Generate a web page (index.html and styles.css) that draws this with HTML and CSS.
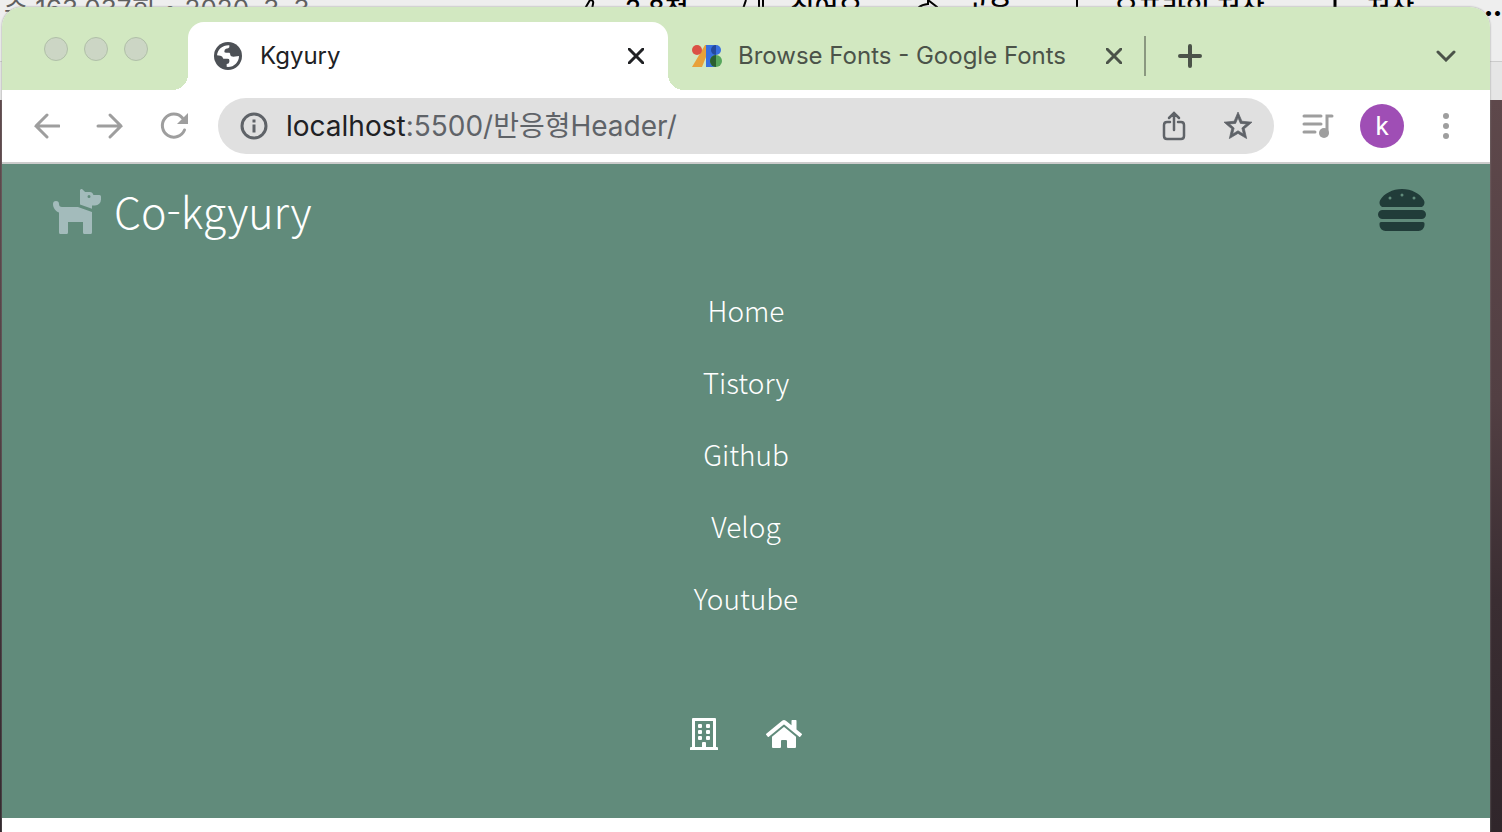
FILE: index.html
```
<!DOCTYPE html>
<html lang="ko">
<head>
  <meta charset="UTF-8">
  <meta name="viewport" content="width=device-width, initial-scale=1.0">
  <title>Kgyury</title>
  <link rel="stylesheet" href="styles.css">
</head>
<body>
  <!-- video page behind the browser -->
  <div class="behind">
    <span class="views">수 163,037회 • 2020. 3. 3.</span>
    <span class="actions">
      <span><svg width="24" height="24" viewBox="0 0 24 24"><path d="M3 22V12h5l7-12q4 0 3 4l-1 5h6l-2 13z" fill="none" stroke="#000" stroke-width="2"/></svg>2.8천</span>
      <span><svg width="24" height="24" viewBox="0 0 24 24"><path d="M5 0L1 12h8M18 0v12M22 0v12" fill="none" stroke="#000" stroke-width="2"/></svg>싫어요</span>
      <span><svg width="24" height="24" viewBox="0 0 24 24"><path d="M14 0l9 7-9 7V9Q5 9 1 16 2 5 14 4z" fill="none" stroke="#000" stroke-width="2"/></svg>공유</span>
      <span><svg width="24" height="24" viewBox="0 0 24 24"><path d="M13 0v16M6 10l7 7 7-7" fill="none" stroke="#000" stroke-width="2"/></svg>오프라인 저장</span>
      <span><svg width="24" height="24" viewBox="0 0 24 24"><path d="M18 0v18M10 9h16" fill="none" stroke="#000" stroke-width="3"/></svg>저장</span>
    </span>
    <span class="more">•••</span>
  </div>

  <div class="browser">
    <div class="tabs">
      <div class="lights"><i></i><i></i><i></i></div>
      <div class="tab active">
        <svg class="globe" viewBox="0 0 84 84">
          <circle cx="42" cy="42" r="42" fill="#4d5156"/>
          <path fill="#fff" d="M9 40C11 22 26 9 46 10L46 16Q44 20 36 20Q31 21 31 29Q31 32 37 32L46 32Q49 33 49 40Q50 44 58 44L75 42C75 60 61 75 42 75L38 74L38 66Q45 66 46 60L46 54Q46 50 40 50L28 50Q25 41 19 41Z"/>
        </svg>
        <span class="tab-title">Kgyury</span>
        <button class="icon-btn" aria-label="Close tab">
          <svg width="16" height="16" viewBox="0 0 16 16"><path d="M1 1l14 14M15 1L1 15" stroke="#202124" stroke-width="3" stroke-linecap="round"/></svg>
        </button>
      </div>
      <div class="tab">
        <svg class="fonts-logo" viewBox="0 0 30 22">
          <path d="M14 0v12l-4 10H0L13 0z" fill="#e8a13a"/>
          <circle cx="5" cy="5" r="5" fill="#db5145"/>
          <path d="M14 0h10v22H14z" fill="#3870e0"/>
          <circle cx="24" cy="5" r="5" fill="#3870e0"/>
          <path d="M24 0a5 5 0 0 0 0 10z" fill="#25499c"/>
          <circle cx="24" cy="16" r="6" fill="#57a65c"/>
          <path d="M24 10a6 6 0 0 0 0 12z" fill="#2a5e31"/>
        </svg>
        <span class="tab-title">Browse Fonts - Google Fonts</span>
        <button class="icon-btn" aria-label="Close tab">
          <svg width="16" height="16" viewBox="0 0 16 16"><path d="M1 1l14 14M15 1L1 15" stroke="#4b5349" stroke-width="3" stroke-linecap="round"/></svg>
        </button>
      </div>
      <button class="icon-btn new-tab" aria-label="New tab">
        <svg width="24" height="24" viewBox="0 0 24 24"><path d="M12 2v20M2 12h20" stroke="#4b5349" stroke-width="4" stroke-linecap="round"/></svg>
      </button>
      <button class="icon-btn tab-search" aria-label="Search tabs">
        <svg width="20" height="12" viewBox="0 0 20 12"><path d="M2 2l8 8 8-8" fill="none" stroke="#4b5349" stroke-width="3" stroke-linecap="round"/></svg>
      </button>
    </div>

    <div class="toolbar">
      <div class="nav-buttons">
        <button class="icon-btn" aria-label="Back">
          <svg width="28" height="28" viewBox="0 0 28 28"><path d="M27 14H4M15 3L4 14l11 11" fill="none" stroke="#9e9e9e" stroke-width="3" stroke-linecap="round"/></svg>
        </button>
        <button class="icon-btn" aria-label="Forward">
          <svg width="28" height="28" viewBox="0 0 28 28"><path d="M2 14h23M14 3l11 11-11 11" fill="none" stroke="#9e9e9e" stroke-width="3" stroke-linecap="round"/></svg>
        </button>
        <button class="icon-btn" aria-label="Reload">
          <svg width="28" height="28" viewBox="0 0 28 28"><path d="M24.500 18A11.500 11.500 0 1 1 22.500 6" fill="none" stroke="#9e9e9e" stroke-width="3" stroke-linecap="round"/><path d="M28 1v11H17z" fill="#9e9e9e"/></svg>
        </button>
      </div>
      <div class="address">
        <svg width="28" height="28" viewBox="0 0 28 28"><circle cx="14" cy="14" r="12" fill="none" stroke="#5f6368" stroke-width="3"/><path d="M12.500 7.500h3v3h-3zM12.500 12.500h3v8h-3z" fill="#5f6368"/></svg>
        <span class="url">localhost<span>:5500/반응형Header/</span></span>
        <button class="icon-btn" aria-label="Share">
          <svg width="24" height="30" viewBox="0 0 24 30"><path d="M8 11H5q-3 0-3 3v11q0 3 3 3h14q3 0 3-3V14q0-3-3-3h-3M12 19V3M7 7l5-5 5 5" fill="none" stroke="#5f6368" stroke-width="2.500" stroke-linecap="round"/></svg>
        </button>
        <button class="icon-btn" aria-label="Bookmark">
          <svg width="28" height="28" viewBox="2 2 20 20"><path fill="#5f6368" stroke="#5f6368" stroke-width=".5" d="M22 9.240l-7.190-.62L12 2 9.190 8.630 2 9.240l5.460 4.730L5.820 21 12 17.270 18.180 21l-1.630-7.030L22 9.240zM12 15.400l-3.760 2.270 1-4.280-3.320-2.880 4.380-.38L12 6.100l1.710 4.040 4.380.38-3.320 2.880 1 4.280L12 15.400z"/></svg>
        </button>
      </div>
      <button class="icon-btn" aria-label="Media controls">
        <svg width="32" height="26" viewBox="0 0 32 26"><path d="M2 3h17M2 11h17M2 19h11" stroke="#9e9e9e" stroke-width="3" stroke-linecap="round"/><path d="M25 20V3h5" fill="none" stroke="#9e9e9e" stroke-width="3" stroke-linecap="round"/><circle cx="22" cy="20" r="5" fill="#9e9e9e"/></svg>
      </button>
      <button class="avatar">k</button>
      <button class="icon-btn" aria-label="Menu">
        <svg width="8" height="28" viewBox="0 0 8 28"><g fill="#9e9e9e"><circle cx="4" cy="4" r="3"/><circle cx="4" cy="14" r="3"/><circle cx="4" cy="24" r="3"/></g></svg>
      </button>
    </div>

    <nav class="navbar">
      <div class="navbar-top">
        <a class="logo" href="#">
          <svg width="54" height="48" viewBox="0 0 576 512"><path fill="#a3bbbb" d="M298.060 224L448 277.550V496a16 16 0 0 1-16 16h-64a16 16 0 0 1-16-16V384H192v112a16 16 0 0 1-16 16h-64a16 16 0 0 1-16-16V282.090C58.840 268.840 32 233.660 32 192a32 32 0 0 1 64 0 32.060 32.060 0 0 0 32 32zM544 112v32a64 64 0 0 1-64 64h-32v35.580l-128-45.710V48c0-14.250 17.220-21.390 27.310-11.310L374.590 64h53.630c10.910 0 23.750 7.920 28.620 17.690L464 96h64a16 16 0 0 1 16 16zm-112 0a16 16 0 1 0-16 16 16 16 0 0 0 16-16z"/></svg>
          <span>Co-kgyury</span>
        </a>
        <button class="icon-btn toggle" aria-label="Toggle menu">
          <svg width="48" height="48" viewBox="0 0 512 512"><path fill="#213c39" d="M464 256H48a48 48 0 0 0 0 96h416a48 48 0 0 0 0-96zm16 128H32a16 16 0 0 0-16 16v16a64 64 0 0 0 64 64h352a64 64 0 0 0 64-64v-16a16 16 0 0 0-16-16zM58.640 224h394.720c34.570 0 54.620-43.900 34.820-75.880C448 83.200 359.550 32.100 256 32c-103.540.1-192 51.200-232.180 116.110C4 180.090 24.070 224 58.640 224zM384 112a16 16 0 1 1-16 16 16 16 0 0 1 16-16zM256 80a16 16 0 1 1-16 16 16 16 0 0 1 16-16zm-128 32a16 16 0 1 1-16 16 16 16 0 0 1 16-16z"/></svg>
        </button>
      </div>
      <ul class="menu">
        <li><a href="#">Home</a></li>
        <li><a href="#">Tistory</a></li>
        <li><a href="#">Github</a></li>
        <li><a href="#">Velog</a></li>
        <li><a href="#">Youtube</a></li>
      </ul>
      <div class="links">
        <a href="#" aria-label="Company">
          <svg width="28" height="32" viewBox="0 0 28 32"><g fill="#fff"><path fill-rule="evenodd" d="M3 0h22q1 0 1 1v28h1q1 0 1 1v2H0v-2q0-1 1-1h1V1q0-1 1-1zM5 3v26h7v-4q0-1 1-1h2q1 0 1 1v4h7V3z"/><rect x="8" y="6" width="4" height="4" rx="1"/><rect x="16" y="6" width="4" height="4" rx="1"/><rect x="8" y="12" width="4" height="4" rx="1"/><rect x="16" y="12" width="4" height="4" rx="1"/><rect x="8" y="18" width="4" height="4" rx="1"/><rect x="16" y="18" width="4" height="4" rx="1"/></g></svg>
        </a>
        <a href="#" aria-label="Home">
          <svg width="36" height="32" viewBox="0 0 576 512"><path fill="#fff" d="M280.370 148.260L96 300.110V464a16 16 0 0 0 16 16l112.060-.29a16 16 0 0 0 15.920-16V368a16 16 0 0 1 16-16h64a16 16 0 0 1 16 16v95.640a16 16 0 0 0 16 16.050L464 480a16 16 0 0 0 16-16V300L295.670 148.260a12.190 12.190 0 0 0-15.300 0zM571.600 251.470L488 182.560V44.050a12 12 0 0 0-12-12h-56a12 12 0 0 0-12 12v72.610L318.470 43a48 48 0 0 0-61 0L4.340 251.470a12 12 0 0 0-1.600 16.900l25.500 31A12 12 0 0 0 45.150 301l235.220-193.740a12.190 12.190 0 0 1 15.300 0L530.900 301a12 12 0 0 0 16.900-1.600l25.500-31a12 12 0 0 0-1.700-16.930z"/></svg>
        </a>
      </div>
    </nav>
  </div>
</body>
</html>
```
FILE: styles.css
```
* {
  box-sizing: border-box;
}
body {
  margin: 0;
  min-height: 100vh;
  padding: 7px 12px 0 2px;
  display: flex;
  overflow: hidden;
  font-family: Inter, "Noto Sans CJK KR", sans-serif;
  background: linear-gradient(#eee 61px, #ccc 61px, #ccc 62px, #e6e6e6 62px, #e6e6e6 100px, #5e484b 100px, #523f43 400px, #3a2d32 600px, #30262b);
}
button {
  border: none;
  padding: 0;
  background: none;
  cursor: pointer;
}
a {
  color: inherit;
  text-decoration: none;
}
svg {
  display: block;
  flex: none;
}
.icon-btn {
  display: flex;
  flex: none;
}

/* page behind */
.behind {
  position: absolute;
  top: 0;
  left: 0;
  right: 0;
  display: flex;
  justify-content: space-between;
  padding-left: 4px;
  font-size: 26px;
  line-height: 18px;
  white-space: nowrap;
}
.views {
  width: 571px;
  color: #606060;
}
.actions {
  display: flex;
  flex: 1;
  gap: 52px;
  font-weight: 500;
}
.actions span {
  display: flex;
  gap: 26px;
}
.more {
  font-size: 16px;
  line-height: 24px;
}

.browser {
  position: relative;
  flex: 1;
  display: flex;
  flex-direction: column;
  background: #fff;
  border-radius: 20px 20px 0 0;
  overflow: hidden;
  box-shadow: 0 0 2px #888;
}

/* tab strip */
.tabs {
  display: flex;
  align-items: center;
  height: 83px;
  padding: 15px 34px 0 42px;
  background: #d2e8c1;
}
.lights {
  display: flex;
  gap: 16px;
  width: 144px;
  margin-bottom: 14px;
}
.lights i {
  width: 24px;
  height: 24px;
  border: 1px solid #b0bfa8;
  border-radius: 50%;
  background: #ccd6c5;
}
.tab {
  position: relative;
  display: flex;
  align-items: center;
  width: 478px;
  height: 68px;
  padding: 0 24px;
  font-size: 24px;
  color: #4b5349;
}
.tab.active {
  width: 480px;
  background: #fff;
  color: #202124;
  border-radius: 16px 16px 0 0;
  padding: 0 24px 0 26px;
}
.tab.active::before,
.tab.active::after {
  content: "";
  position: absolute;
  bottom: 0;
  width: 16px;
  height: 16px;
}
.tab.active::before {
  right: 100%;
  background: radial-gradient(circle at 0 0, transparent 16px, #fff 16px);
}
.tab.active::after {
  left: 100%;
  background: radial-gradient(circle at 100% 0, transparent 16px, #fff 16px);
}
.tab:not(.active)::after {
  content: "";
  position: absolute;
  right: 0;
  height: 40px;
  border-right: 2px solid #8a9880;
}
.globe {
  width: 28px;
  height: 28px;
}
.fonts-logo {
  width: 30px;
  height: 22px;
}
.tab-title {
  flex: 1;
  margin-left: 18px;
  padding-bottom: 2px;
  white-space: nowrap;
}
.tab:not(.active) .tab-title {
  margin-left: 16px;
}
.new-tab {
  margin-left: 32px;
}
.tab-search {
  margin-left: auto;
}

/* toolbar */
.toolbar {
  display: flex;
  align-items: center;
  height: 74px;
  padding: 0 40px 0 30px;
  border-bottom: 2px solid #ccc;
}
.nav-buttons {
  display: flex;
  gap: 36px;
  margin-right: 30px;
}
.address {
  flex: 1;
  display: flex;
  align-items: center;
  height: 56px;
  margin-right: 28px;
  padding: 0 22px;
  border-radius: 28px;
  background: #e0e0e0;
}
.address .icon-btn {
  margin-left: 38px;
}
.url {
  flex: 1;
  margin-left: 18px;
  padding-bottom: 4px;
  font-size: 28px;
  color: #202124;
}
.url span {
  color: #5f6368;
}
.avatar {
  width: 44px;
  height: 44px;
  margin: 0 38px 0 26px;
  border-radius: 50%;
  background: #9f4eb5;
  color: #fff;
  font-family: Roboto, sans-serif;
  font-size: 26px;
}

/* navbar */
.navbar {
  display: flex;
  flex-direction: column;
  margin-bottom: 14px;
  padding: 16px 48px 68px;
  background: #618b7b;
  color: #fff;
  font-family: "Noto Sans CJK KR", sans-serif;
  font-weight: 300;
}
.navbar-top {
  display: flex;
  justify-content: space-between;
}
.logo {
  display: flex;
  align-items: center;
  gap: 10px;
  height: 60px;
  font-size: 43px;
}
.toggle {
  align-items: center;
  padding-right: 16px;
}
.menu {
  list-style: none;
  margin: 34px 0 0;
  padding: 0;
  text-align: center;
  font-size: 28px;
}
.menu li {
  line-height: 72px;
}
.links {
  display: flex;
  justify-content: center;
  gap: 48px;
  margin-top: 84px;
}
```
